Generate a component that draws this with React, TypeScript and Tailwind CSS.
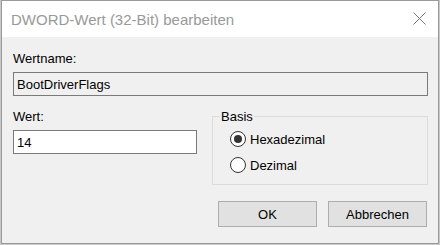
function Radio({ checked, label }: { checked?: boolean; label: string }) {
  return (
    <div className="flex h-[20px] items-center gap-[4px]">
      <span className="flex h-[16px] w-[16px] items-center justify-center rounded-full border border-[#333333] bg-white">
        {checked && <span className="h-[8px] w-[8px] rounded-full bg-[#333333]" />}
      </span>
      <span>{label}</span>
    </div>
  );
}

export default function App() {
  return (
    <div className="h-[245px] w-[440px] bg-[#c9c9c9] font-['Liberation_Sans',Arial,sans-serif] text-[13px] leading-[15px] text-black">
      <div className="ml-px flex h-[244px] w-[438px] flex-col border border-[#9a9a9a] bg-[#f0f0f0]">
        <div className="flex h-[36px] shrink-0 items-center justify-between bg-white pl-[9px] pr-[12px]">
          <span className="text-[15px] text-[#999999]">DWORD-Wert (32-Bit) bearbeiten</span>
          <svg width="13" height="13" viewBox="0 0 13 13" className="mb-[1px]">
            <path d="M0.5 0.5 L12.5 12.5 M12.5 0.5 L0.5 12.5" stroke="#777777" strokeWidth="1" fill="none" />
          </svg>
        </div>

        <div className="flex flex-col pl-[11px] pt-[14px]">
          <span>Wertname:</span>
          <div className="mt-[6px] flex h-[24px] w-[415px] items-center border border-[#7a7a7a] bg-[#f0f0f0] pl-[3px]">
            BootDriverFlags
          </div>

          <div className="mt-[13px] flex">
            <div className="flex w-[184px] flex-col">
              <span>Wert:</span>
              <div className="mt-[6px] flex h-[24px] items-center border border-[#7a7a7a] bg-white pl-[3px]">
                14
              </div>
            </div>

            <div className="relative ml-[15px] mt-[7px] h-[69px] w-[216px] border border-[#dcdcdc] pl-[17px] pt-[12px]">
              <span className="absolute left-[7px] top-[-8px] bg-[#f0f0f0] px-px">Basis</span>
              <div className="flex flex-col gap-[6px]">
                <Radio checked label="Hexadezimal" />
                <Radio label="Dezimal" />
              </div>
            </div>
          </div>

          <div className="mt-[16px] flex w-[414px] justify-end gap-[11px]">
            <button className="flex h-[26px] w-[99px] items-center justify-center border border-[#adadad] bg-[#e1e1e1]">
              OK
            </button>
            <button className="flex h-[26px] w-[99px] items-center justify-center border border-[#adadad] bg-[#e1e1e1]">
              Abbrechen
            </button>
          </div>
        </div>
      </div>
    </div>
  );
}
